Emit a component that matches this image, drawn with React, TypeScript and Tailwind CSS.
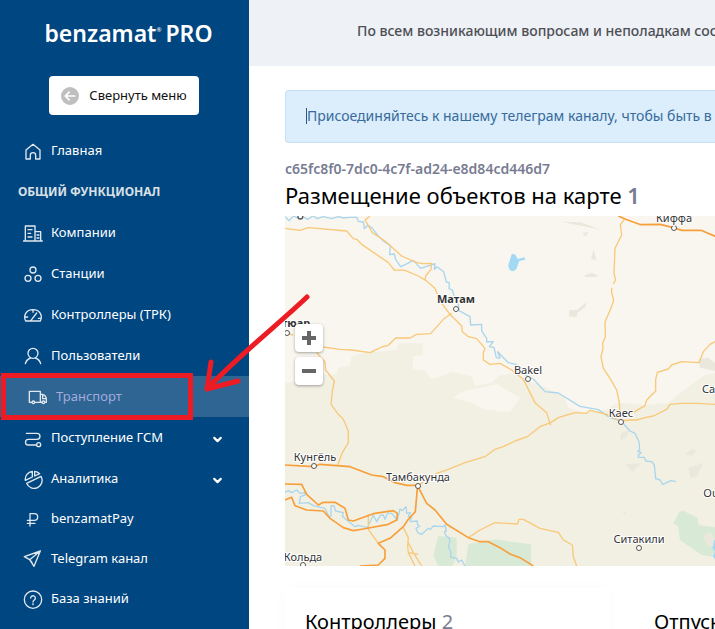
import type { ReactNode } from "react";
import { FaCircleArrowLeft } from "react-icons/fa6";
import { ChevronDown } from "lucide-react";

const icons: Record<string, ReactNode> = {
    home: <path d="M9 27 30 10 51 27V54H38V43a8 8 0 0 0-16 0V54H9Z" />,
    companies: (
        <path d="M1 54H58M7 54V9H36V54M36 26H53V54M15 20h12M15 31h8M15 42h12M42 36h6M42 45h6" />
    ),
    stations: (
        <>
            <circle cx="30" cy="18" r="9" />
            <circle cx="15" cy="43" r="9" />
            <circle cx="45" cy="43" r="9" />
        </>
    ),
    controllers: (
        <path d="M8 48C0 32 9 14 30 14S60 32 52 48ZM24 46 41 24M30 15v7M6 36h8M46 40h8" />
    ),
    users: (
        <>
            <circle cx="30" cy="22" r="15" />
            <path d="M7 53C10 42 17 38 23 36M53 53C50 42 43 38 37 36" />
        </>
    ),
    transport: (
        <>
            <path d="M11 46H4V13H37V46H22M37 22h6c7 2 12 8 12 15v9h-4M37 46h4M44 24v11h11" />
            <circle cx="16" cy="46" r="4" />
            <circle cx="46" cy="46" r="4" />
        </>
    ),
    supply: (
        <>
            <path d="M10 16H42a9 9 0 0 1 0 18H16a8 8 0 0 0 0 17H40" />
            <circle cx="47" cy="50" r="6" />
        </>
    ),
    analytics: (
        <path d="M28 7A24 24 0 0 0 7 34L28 24ZM35 7V21L50 14A24 24 0 0 0 35 7ZM54 22 11 43A24 24 0 1 0 54 22Z" />
    ),
    pay: <path d="M21 51V14H34a10 10 0 0 1 0 20H13M13 43H36" />,
    telegram: <path d="M52 6 4 23 20 32 33 52ZM52 6 20 32M20 32 27 40" />,
    help: (
        <>
            <circle cx="30" cy="32" r="26" />
            <path d="M23 27a7 7 0 1 1 11 6c-3 2-4 3-4 6M30 44v3" />
        </>
    ),
};

const menu = [
    { id: "companies", title: "Компании" },
    { id: "stations", title: "Станции" },
    { id: "controllers", title: "Контроллеры (ТРК)" },
    { id: "users", title: "Пользователи" },
    { id: "transport", title: "Транспорт", active: true },
    { id: "supply", title: "Поступление ГСМ", nested: true },
    { id: "analytics", title: "Аналитика", nested: true },
];

const links = [
    { id: "pay", title: "benzamatPay" },
    { id: "telegram", title: "Telegram канал" },
    { id: "help", title: "База знаний" },
];

const cities = [
    { name: "Киффа", x: 389, y: 6, cx: 389, cy: 12 },
    { name: "Матам", x: 171, y: 87, cx: 171, cy: 93, bold: true },
    { name: "тюар", x: 11, y: 111, cx: 2, cy: 117, bold: true },
    { name: "Bakel", x: 243, y: 158, cx: 243, cy: 163 },
    { name: "Сан", x: 427, y: 177 },
    { name: "Каес", x: 336, y: 201, cx: 336, cy: 206 },
    { name: "Кунгёль", x: 30, y: 245, cx: 29, cy: 250 },
    { name: "Тамбакунда", x: 133, y: 265, cx: 133, cy: 270 },
    { name: "Oussou", x: 438, y: 281 },
    { name: "Ситакили", x: 354, y: 327, cx: 354, cy: 332 },
    { name: "Кольда", x: 18, y: 345, cx: 18, cy: 349 },
];

const Icon = ({ id }: { id: string }) => (
    <svg
        viewBox="0 0 60 60"
        className="w-5 h-5 shrink-0"
        fill="none"
        stroke="#e3e8ee"
        strokeWidth={4}
        strokeLinecap="round"
        strokeLinejoin="round"
        aria-hidden="true"
    >
        {icons[id]}
    </svg>
);

const MenuItem = ({
    id,
    title,
    active,
    nested,
}: {
    id: string;
    title: string;
    active?: boolean;
    nested?: boolean;
}) => (
    <li className="relative">
        <a
            href={`#${id}`}
            className={
                active
                    ? "flex items-center gap-2 h-[41px] pl-7 pr-[25px] bg-[#2e6592] text-[#a3abdc]"
                    : "flex items-center gap-2 h-[41px] pl-[23px] pr-[25px] text-white"
            }
        >
            <Icon id={id} />
            <span className="grow pb-0.5">{title}</span>
            {nested && <ChevronDown size={13} strokeWidth={4} className="mt-1" />}
        </a>
        {active && (
            <span className="absolute left-px right-14 -inset-y-[3px] border-[5px] border-[#ed1c24]" />
        )}
    </li>
);

const Sidebar = () => (
    <aside className="w-[249px] shrink-0 bg-[#004680] text-[13px] leading-5">
        <div className="h-[66px] flex items-center justify-center pl-2 text-white text-[23px] font-semibold">
            benzamat
            <sup className="text-[6px] font-normal">®</sup>
            <span className="pl-1">PRO</span>
        </div>
        <button className="mt-[10px] mx-[49px] w-[150px] h-[39px] flex items-center justify-center gap-[10px] rounded bg-white text-[#111]">
            <FaCircleArrowLeft size={18} className="text-[#bfbfbf]" />
            <span className="pb-0.5">Свернуть меню</span>
        </button>
        <nav className="pt-[15px]">
            <ul>
                <MenuItem id="home" title="Главная" />
            </ul>
            <h2 className="h-[41px] flex items-center pl-[18px] text-xs font-bold text-[#dbe0e6]">
                ОБЩИЙ ФУНКЦИОНАЛ
            </h2>
            <ul>
                {menu.map((item) => (
                    <MenuItem key={item.id} {...item} />
                ))}
            </ul>
            <ul>
                {links.map(({ id, title }) => (
                    <li key={id}>
                        <a href={`#${id}`} className="flex items-center gap-2 h-10 pl-[23px] text-white">
                            <Icon id={id} />
                            <span className="pb-0.5">{title}</span>
                        </a>
                    </li>
                ))}
            </ul>
        </nav>
    </aside>
);

const CityMap = () => (
    <svg
        viewBox="0 0 430 350"
        preserveAspectRatio="xMidYMid slice"
        className="w-full h-[350px] bg-[#f9f6ef]"
        role="img"
        aria-label="Карта объектов"
    >
        {/* geometry is stored at three units per map pixel */}
        <g transform="scale(.33333)" fill="none" strokeLinejoin="round">
            <path
                fill="#f2f0e3"
                d="M0 500 45 495 70 480 155 475 160 455 195 450 200 420 240 410 335 402 340 382 412 382 415 418 384 420 384 460 420 465 440 490 500 468 560 480 570 510 620 500 640 480 690 470 720 495 760 505 835 540 850 575 900 590 960 582 1000 560 1080 567 1150 560 1200 520 1255 480 1290 470V1050H0Z"
            />
            <g fill="#f9f6ef">
                <path d="m505 545 30-20 100-20 70 40-30 43-80-8-30-18Z" />
                <path d="m630 545 45 3v20l-15 20-30-2Z" />
            </g>
            <g fill="#d8e9d5">
                <path d="m460 960 55 5v55l-13 30h-42l-15-30Z" />
                <path d="m550 985 80-15 108 15v65H540Z" />
                <path d="m1183 887 12-3 43 22 3 22 49 6v90l-40-7-65-45-6-42-14-6Z" />
            </g>
            <g fill="#eae7dc">
                <path d="m900 178 20-8 22 10-12 3h-30Z" />
                <path d="m853 282h22l30-23-4 15-25 18v10h-23Z" />
                <path d="m918 130 8-30 8 32Z" />
                <path d="m895 50 14-3-3 12h-10Z" />
                <path d="m832 17 55 2 60 22-50-10-40-8Z" />
                <path d="m1008 650 26-8-10 20-18 12Z" />
                <path d="m1020 745 48-3-25 26Z" />
                <path d="m1210 755 45-15-20 42-18 4Z" />
                <path d="m1200 715 20-15 15 4-15 15Z" />
                <path d="m1010 887h8l12 10-10-2Z" />
                <path d="m1240 430 30-5 20 15v25l-45-10Z" />
                <path d="m1255 960 20-12 15 20v30l-25-12Z" />
            </g>
            <g fill="#a4d9f5">
                <path d="m672 140 8-25c10-5 14 5 18 14l20-5 3 7-18 4-9 25c-18 16-28-6-22-20Z" />
                <path d="m1288 972 8-5v70l-12-15 6-15-8-10Z" />
            </g>

            <g stroke="#a9d6ee" strokeWidth={4}>
                <path d="M0 2 12 14 26 0 38 6 50 0 68 10 84 0 97 8 115 2 140 8 160 2 175 6 193 4 215 4 220 16 235 18 238 38 248 28 260 35 280 60 296 76 316 88 314 116 328 114 332 130 340 142 347 152 362 145 385 133 407 157 450 143 448 160 456 152 476 167 484 198 493 200 492 218 502 222 510 250 520 262 522 284 555 302 557 327 590 325 590 345 605 367 605 378 625 377 613 392 627 394 634 425 645 426 638 407 670 440 692 445 728 482 745 489 780 527 820 531 885 571 940 581 975 605 1008 615 1035 645 1050 652 1062 677 1064 702 1058 706 1068 710 1060 718 1060 724 1078 724 1082 735 1100 737 1108 747 1112 788 1125 792 1133 805 1158 794 1173 797" />
                <path d="M0 829 10 824 20 830 35 822 45 832 60 830 60 837 46 842 43 862 70 860 85 869 120 877 132 902 138 900 138 870 147 869 152 885 175 890 172 900 182 910 210 932 220 928 247 935 265 897 275 917 286 898 295 897 300 910 308 892 320 892 337 912 345 879 352 884 363 872 365 892 376 890 370 902 380 902 375 917 397 915 397 925 404 930 393 937 398 950 410 955 430 937 436 940 445 930 475 932 480 927 484 945 478 947 485 962 492 965 495 977 490 992 497 1007 497 1023 515 1027 520 1038 530 1032 540 1050" />
            </g>

            <g stroke="#f9c878" strokeWidth={4}>
                <path d="M0 37 45 43 70 35 185 45 205 68 215 70 230 85 310 140 328 162 360 163 400 180 422 193 450 217 465 255 495 295 515 315 530 330 532 347 550 362 575 368 600 397 595 410 595 432 615 445 645 442 680 462 715 490 750 560 785 590 797 628" />
                <path d="M255 0 240 12 262 50 300 75 350 120 395 140 415 143 440 142 438 160 422 180 420 192" />
                <path d="M0 351 25 357M115 393 165 400 200 402 255 410 275 400 290 393 310 388 332 366 375 366 395 355 437 353 475 310 500 292" />
                <path d="M95 410 120 438 122 462 148 495 142 525 138 565 160 595 175 610 190 645 190 680 172 710 158 747" />
                <path d="M1018 10 1006 27 1010 57 990 97 987 172 992 192 985 204M980 215 980 230 986 252 978 277 960 317 961 362 953 382 954 397 948 422 955 457 975 487 995 522 1003 560 1006 605" />
                <path d="M1290 377 1275 385 1255 407 1242 440 1190 437 1160 447 1150 459 1117 469 1112 490 1112 525 1085 552 1080 569 1045 589" />
                <path d="M1290 565 1235 562 1190 562 1155 565 1145 580 1105 600 1080 605 1055 612 1035 612 1005 615 965 595 915 583 905 592 870 590 820 605 797 620 765 632 727 662 690 675 655 692 630 700 600 722 540 740 490 760 455 772 405 805" />
                <path d="M550 965 585 942 630 920 697 924 702 910 715 910 765 937 820 949 835 972 862 987 865 1022 875 1050" />
                <path d="M250 895V940L280 982M355 935 370 965 368 990 370 1010 390 1050M370 980 385 1010 410 1050M370 1010 400 1015" />
            </g>
            <g stroke="#f79f3b" strokeWidth={5}>
                <path d="M0 747 85 752 105 745 195 752 260 777 295 782 330 800 365 808 397 808 425 862 450 882 485 925 550 965 585 977 610 977 645 995 675 1014 705 1025 745 1050" />
                <path d="M397 817 391 887 370 910 355 932 315 967 280 982 300 1002 300 1027 280 1047 225 1050" />
                <path d="M0 804 50 805 65 835 100 867 115 859 150 859 180 877 190 912 205 915 240 902 265 893 325 884 337 892 335 912 310 925 235 939 205 944 175 935 135 907 115 885 65 882 30 869 20 844 0 852" />
                <path d="M1000 0 1022 10 1067 26 1125 25 1165 35 1190 43H1248L1293 62" />
            </g>
            <circle cx="46" cy="2" r="7" fill="#fff" stroke="#555" strokeWidth={4} />
        </g>

        <g fontFamily='"Noto Sans", sans-serif' fontSize={11} textAnchor="middle" fill="#333">
            {cities.map(({ name, x, y, cx, cy, bold }) => (
                <g key={name}>
                    {cx && (
                        <circle cx={cx} cy={cy} r={2.5} fill="#fff" stroke="#555" strokeWidth={1} />
                    )}
                    <text
                        x={x}
                        y={y}
                        fontWeight={bold ? 700 : 400}
                        stroke="#fff"
                        strokeWidth={2}
                        paintOrder="stroke"
                    >
                        {name}
                    </text>
                </g>
            ))}
        </g>
    </svg>
);

const zoomButton =
    "w-7 h-7 flex items-center justify-center rounded bg-white shadow-[0_1px_3px_rgba(0,0,0,0.35)]";

const App = () => {
    return (
        <div className="relative flex h-screen overflow-hidden bg-white font-['Noto_Sans',sans-serif]">
            <Sidebar />
            <main className="grow min-w-0 flex flex-col whitespace-nowrap overflow-hidden">
                <header className="h-[66px] shrink-0 flex items-center pl-[108px] pb-1 bg-[#eef1f6] text-sm font-medium text-[#4d4f54]">
                    По всем возникающим вопросам и неполадкам сообщайте
                </header>
                <div className="pt-6 pl-9">
                    <div className="h-[53px] flex items-center pl-5 pb-0.5 rounded-l border border-r-0 border-[#c5e0f8] bg-[#dcedfb] text-sm text-[#366b9b] overflow-hidden">
                        <span className="h-4 border-l border-[#245a8a]" />
                        Присоединяйтесь к нашему телеграм каналу, чтобы быть в курсе
                    </div>
                    <p className="mt-4 text-sm font-semibold text-[#787c92]">
                        c65fc8f0-7dc0-4c7f-ad24-e8d84cd446d7
                    </p>
                    <h1 className="text-[22px] leading-8 mb-[5px] text-black">
                        Размещение объектов на карте{" "}
                        <span className="font-semibold text-[#787c92]">1</span>
                    </h1>
                    <div className="relative">
                        <CityMap />
                        <div className="absolute left-[10px] top-[108px] flex flex-col gap-[5px]">
                            <button className={zoomButton} aria-label="Приблизить">
                                <svg viewBox="0 0 14 14" className="w-[14px]" stroke="#666" strokeWidth={4}>
                                    <path d="M7 0V14M0 7H14" />
                                </svg>
                            </button>
                            <button className={zoomButton} aria-label="Отдалить">
                                <svg viewBox="0 0 14 14" className="w-[14px]" stroke="#666" strokeWidth={4}>
                                    <path d="M0 7H14" />
                                </svg>
                            </button>
                        </div>
                    </div>
                    <div className="flex gap-6 pt-[22px] text-xl text-black">
                        <section className="w-[325px] h-40 shrink-0 px-5 pt-5 shadow-[0_0_16px_rgba(0,0,0,0.02)]">
                            <h2>
                                Контроллеры <span className="text-[#787c92]">2</span>
                            </h2>
                        </section>
                        <section className="w-[325px] h-40 shrink-0 px-5 pt-5">
                            <h2>Отпуски</h2>
                        </section>
                    </div>
                </div>
            </main>
            <svg
                viewBox="0 0 110 100"
                className="absolute left-[203px] top-[294px] w-[110px] h-[100px] pointer-events-none"
                fill="none"
                stroke="#ed1c24"
                strokeWidth={5}
                strokeLinecap="round"
                strokeLinejoin="round"
                aria-hidden="true"
            >
                <path d="M104 3C78 28 35 62 4 95M8 68 4 95 35 87" />
            </svg>
        </div>
    );
};

export default App;
